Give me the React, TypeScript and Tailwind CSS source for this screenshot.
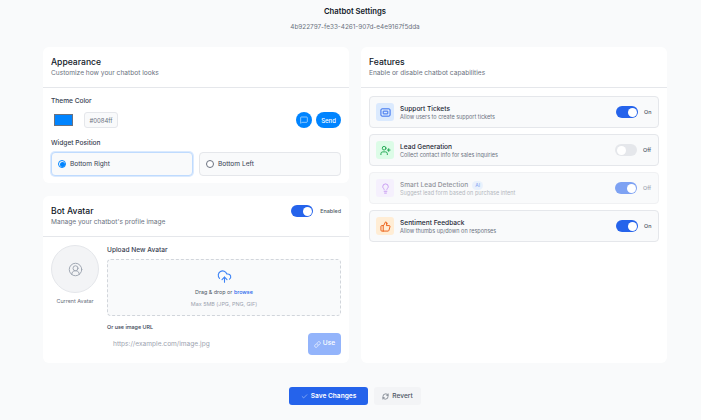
import { Check, CloudUpload, Lightbulb, Link, MessageSquare, RefreshCw, ThumbsUp, UserPlus, CircleUserRound } from "lucide-react"
import React from "react"

const TicketIcon = ({ className }: { className?: string }) => (
  <svg viewBox="0 0 24 24" fill="none" stroke="currentColor" strokeWidth="2" className={className}>
    <rect x="2" y="4" width="20" height="16" rx="2.5" />
    <rect x="7" y="9" width="10" height="6" rx="0.5" />
  </svg>
)

const Toggle = ({ on, muted }: { on: boolean; muted?: boolean }) => (
  <div
    className={`flex h-[12px] w-[22px] items-center rounded-full px-[1.5px] ${on ? "justify-end" : "justify-start"} ${
      on ? (muted ? "bg-[#7ea2f3]" : "bg-[#2563eb]") : "bg-[#e5e7eb]"
    }`}
  >
    <div className="h-[9px] w-[9px] rounded-full bg-white" />
  </div>
)

const features = [
  { title: "Support Tickets", desc: "Allow users to create support tickets", icon: TicketIcon, box: "bg-[#dbeafe]", color: "text-[#2563eb]", on: true, label: "On" },
  { title: "Lead Generation", desc: "Collect contact info for sales inquiries", icon: UserPlus, box: "bg-[#dcfce7]", color: "text-[#16a34a]", on: false, label: "Off" },
  { title: "Smart Lead Detection", desc: "Suggest lead form based on purchase intent", icon: Lightbulb, box: "bg-[#f3e8ff]", color: "text-[#9333ea]", on: true, label: "Off", muted: true, ai: true },
  { title: "Sentiment Feedback", desc: "Allow thumbs up/down on responses", icon: ThumbsUp, box: "bg-[#ffedd5]", color: "text-[#ea580c]", on: true, label: "On" },
]

const CardHead = ({ title, sub }: { title: string; sub: string }) => (
  <div>
    <h2 className="text-[8.6px] leading-[13px] font-medium text-[#111827]">{title}</h2>
    <p className="mt-[0px] text-[6.6px] leading-[9px] text-[#6b7280]">{sub}</p>
  </div>
)

export default function App() {
  return (
    <div className="flex h-[420px] w-[701px] flex-col items-center overflow-hidden bg-[#f9fafb] pl-[9px] font-['Inter',sans-serif]">
      <div className="mt-[6px] text-center">
        <h1 className="text-[7.7px] leading-[11px] font-semibold text-[#111827]">Chatbot Settings</h1>
        <p className="mt-[6px] text-[6.4px] leading-[9px] text-[#6b7280]">4b922797-fe33-4261-907d-e4e9167f5dda</p>
      </div>

      <div className="mt-[15px] grid w-[624px] grid-cols-2 gap-x-[12px]">
        <div className="flex flex-col gap-[13px]">
          <section className="h-[136px] rounded-[6px] bg-white">
            <div className="h-[41px] border-b border-[#e5e7eb] px-[8px] pt-[9px]">
              <CardHead title="Appearance" sub="Customize how your chatbot looks" />
            </div>
            <div className="px-[8px] pt-[9px]">
              <p className="text-[6.6px] leading-[9px] font-medium text-[#374151]">Theme Color</p>
              <div className="mt-[6px] flex h-[16px] items-center">
                <div className="ml-[3px] h-[12px] w-[19px] border border-[#6b7280] bg-[#0084ff]" />
                <div className="ml-[11px] flex h-[16px] w-[34px] items-center justify-center rounded-[3px] border border-[#e5e7eb] bg-[#f9fafb] text-[6px] text-[#6b7280]">#0084ff</div>
                <div className="ml-auto flex h-[16px] w-[16px] items-center justify-center rounded-full bg-[#0084ff]">
                  <MessageSquare className="h-[8px] w-[8px] text-white/80" />
                </div>
                <div className="ml-[4px] flex h-[16px] w-[25px] items-center justify-center rounded-full bg-[#0084ff] text-[6px] font-medium text-white">Send</div>
              </div>
              <p className="mt-[11px] text-[6.6px] leading-[9px] font-medium text-[#374151]">Widget Position</p>
              <div className="mt-[4px] grid grid-cols-2 gap-[6px]">
                <div className="flex h-[24px] items-center gap-[4px] rounded-[4px] border border-[#bfdbfe] bg-[#f9fafb] px-[6px] shadow-[0_0_0_1px_#dbeafe]">
                  <div className="flex h-[8px] w-[8px] items-center justify-center rounded-full border border-[#0084ff]">
                    <div className="h-[5px] w-[5px] rounded-full bg-[#0084ff]" />
                  </div>
                  <span className="pt-[1px] text-[6.6px] text-[#374151]">Bottom Right</span>
                </div>
                <div className="flex h-[24px] items-center gap-[4px] rounded-[4px] border border-[#e5e7eb] bg-[#f9fafb] px-[6px]">
                  <div className="h-[8px] w-[8px] rounded-full border border-[#6b7280] bg-white" />
                  <span className="pt-[1px] text-[6.6px] text-[#374151]">Bottom Left</span>
                </div>
              </div>
            </div>
          </section>

          <section className="h-[167px] rounded-[6px] bg-white">
            <div className="flex h-[41px] items-start justify-between border-b border-[#e5e7eb] px-[8px] pt-[9px]">
              <CardHead title="Bot Avatar" sub="Manage your chatbot's profile image" />
              <div className="flex items-center gap-[7px]">
                <Toggle on />
                <span className="text-[5.4px] font-medium text-[#4b5563]">Enabled</span>
              </div>
            </div>
            <div className="flex gap-[8px] px-[8px] pt-[8px]">
              <div className="flex w-[48px] shrink-0 flex-col items-center">
                <div className="flex h-[48px] w-[48px] items-center justify-center rounded-full border border-[#e5e7eb] bg-[#f3f4f6]">
                  <CircleUserRound className="h-[15px] w-[15px] text-[#9ca3af]" strokeWidth={1.5} />
                </div>
                <span className="mt-[4px] text-[5.4px] leading-[8px] text-[#6b7280]">Current Avatar</span>
              </div>
              <div className="min-w-0 flex-1">
                <p className="pt-[1px] text-[6.6px] leading-[9px] font-medium text-[#374151]">Upload New Avatar</p>
                <div className="mt-[4px] flex h-[57px] flex-col items-center rounded-[4px] border border-dashed border-[#d1d5db] bg-[#f9fafb] pt-[9px]">
                  <CloudUpload className="h-[15px] w-[15px] text-[#3b82f6]" strokeWidth={1.75} />
                  <p className="mt-[4px] text-[5.4px] leading-[8px] text-[#4b5563]">
                    Drag &amp; drop or <span className="font-medium text-[#2563eb]">browse</span>
                  </p>
                  <p className="mt-[4px] text-[5.4px] leading-[8px] text-[#9ca3af]">Max 5MB (JPG, PNG, GIF)</p>
                </div>
                <p className="mt-[7px] text-[5.4px] leading-[8px] font-medium text-[#374151]">Or use image URL</p>
                <div className="mt-[2px] flex items-center justify-between">
                  <span className="ml-[6px] pt-[1px] text-[6.6px] text-[#9ca3af]">https://example.com/image.jpg</span>
                  <div className="flex h-[22px] w-[33px] items-center justify-center gap-[2px] rounded-[4px] bg-[#93b4fb] text-[6.6px] font-medium text-white">
                    <Link className="h-[7px] w-[7px]" />
                    Use
                  </div>
                </div>
              </div>
            </div>
          </section>
        </div>

        <section className="h-[316px] rounded-[6px] bg-white">
          <div className="h-[41px] border-b border-[#e5e7eb] px-[8px] pt-[9px]">
            <CardHead title="Features" sub="Enable or disable chatbot capabilities" />
          </div>
          <div className="flex flex-col gap-[6px] px-[8px] pt-[8px]">
            {features.map((f) => (
              <div key={f.title} className={`flex h-[32px] items-center rounded-[4px] border bg-[#f9fafb] pr-[6px] pl-[6px] ${f.muted ? "border-[#f0f1f3]" : "border-[#e5e7eb]"}`}>
                <div className={`flex h-[18px] w-[18px] items-center justify-center rounded-[3px] ${f.box} ${f.muted ? "opacity-50" : ""}`}>
                  <f.icon className={`h-[11px] w-[11px] ${f.color}`} />
                </div>
                <div className={`ml-[6px] ${f.muted ? "opacity-50" : ""}`}>
                  <div className="flex items-center gap-[4px] pt-[1px]">
                    <span className="text-[6.6px] leading-[9px] font-medium text-[#1f2937]">{f.title}</span>
                    {f.ai && <span className="rounded-full bg-[#dbeafe] px-[3px] text-[5px] leading-[9px] font-medium text-[#2563eb]">AI</span>}
                  </div>
                  <p className="text-[5.5px] leading-[7px] text-[#6b7280]">{f.desc}</p>
                </div>
                <div className="ml-auto flex items-center gap-[6px]">
                  <Toggle on={f.on} muted={f.muted} />
                  <span className={`text-[5.4px] font-medium ${f.label === "On" ? "w-[8px]" : "w-[9px]"} ${f.muted ? "text-[#9ca3af]" : "text-[#4b5563]"}`}>{f.label}</span>
                </div>
              </div>
            ))}
          </div>
        </section>
      </div>

      <div className="mt-[24px] flex gap-[6px]">
        <div className="flex h-[18px] w-[79px] items-center justify-center gap-[3px] rounded-[3px] bg-[#2563eb] pt-[2px] text-[6.6px] font-semibold text-white">
          <Check className="-mt-[1px] h-[7px] w-[7px] text-white/70" />
          Save Changes
        </div>
        <div className="flex h-[18px] w-[47px] items-center justify-center gap-[3px] rounded-[3px] bg-[#f3f4f6] pt-[2px] text-[6.6px] font-medium text-[#4b5563]">
          <RefreshCw className="-mt-[1px] h-[7px] w-[7px]" />
          Revert
        </div>
      </div>
    </div>
  )
}
